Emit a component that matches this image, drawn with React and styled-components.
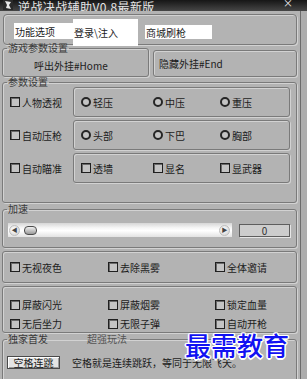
import React from "react";
import styled, { createGlobalStyle } from "styled-components";

const GlobalStyle = createGlobalStyle`
	html, body {
		margin: 0;
		padding: 0;
		background: #b3b3b3;
	}
	body {
		font-family: "Noto Sans CJK SC", "DejaVu Sans", sans-serif;
	}
`;

const Window = styled.div`
	position: relative;
	width: 307px;
	height: 379px;
	overflow: hidden;
	background: #b3b3b3;
	display: flex;
	flex-direction: column;
	font-size: 10px;
	color: #1c1c1c;
`;

const TitleBar = styled.div`
	height: 11px;
	flex-shrink: 0;
	display: flex;
	align-items: flex-end;
	overflow: hidden;
	background: linear-gradient(#161616, #464646);
`;

const TitleIcon = styled.svg`
	width: 10px;
	height: 10px;
	margin: 0 5px 0 3px;
	align-self: flex-start;
`;

const TitleText = styled.div`
	font-size: 12px;
	line-height: 12px;
	margin-bottom: -2px;
	color: #e6e6e6;
	letter-spacing: 0.4px;
	white-space: nowrap;
`;

const CloseGlyph = styled.div`
	margin-left: auto;
	margin-right: 14px;
	align-self: flex-start;
	font-size: 10px;
	line-height: 6px;
	color: #f0f0f0;
`;

const Body = styled.div`
	flex: 1;
	display: flex;
`;

const Content = styled.div`
	width: 296px;
	padding-left: 2px;
	display: flex;
	flex-direction: column;
`;

const RightEdge = styled.div`
	flex: 1;
	margin-left: 2px;
	border-left: 1px solid #6c6c6c;
	background: #adadad;
`;

const TabStrip = styled.div`
	margin: 3px 0 0 1px;
	width: 294px;
	height: 31px;
	box-sizing: border-box;
	border: 1px solid #7a7a7a;
	border-radius: 4px;
	box-shadow: inset 1px 1px 0 #d2d2d2, 1px 1px 0 #d2d2d2;
	display: flex;
	align-items: flex-start;
	padding-left: 10px;
`;

const Tab = styled.div`
	width: ${(p) => p.$w}px;
	height: ${(p) => p.$h}px;
	margin-top: ${(p) => p.$top}px;
	margin-right: ${(p) => p.$gap || 0}px;
	background: #ffffff;
	display: flex;
	align-items: center;
	padding-left: 1px;
	box-sizing: border-box;
	white-space: nowrap;
`;

const Group = styled.fieldset`
	margin: ${(p) => p.$mt || 0}px 0 0 0;
	padding: 0;
	width: ${(p) => p.$w || 295}px;
	height: ${(p) => p.$h}px;
	box-sizing: border-box;
	border: 1px solid #7a7a7a;
	border-radius: 3px;
	box-shadow: inset 1px 1px 0 #d2d2d2, 1px 1px 0 #d2d2d2;
	min-width: 0;
`;

const Legend = styled.legend`
	margin-left: 4px;
	padding: 0 1px;
	line-height: ${(p) => p.$lh || 12}px;
	color: #3a3a3a;
	white-space: nowrap;
`;

const LegendSecond = styled.span`
	margin-left: 39px;
	padding-right: 2px;
	color: #555;
`;

const GameRow = styled.div`
	margin-top: -2px;
	display: flex;
	gap: 4px;
`;

const GameLabel = styled.div`
	padding: 5px 0 0 31px;
	white-space: nowrap;
`;

const HideBox = styled.div`
	margin-top: 7px;
	width: 144px;
	height: 27px;
	box-sizing: border-box;
	border: 1px solid #7a7a7a;
	border-radius: 3px;
	box-shadow: inset 1px 1px 0 #d2d2d2, 1px 1px 0 #d2d2d2;
	display: flex;
	align-items: center;
	padding-left: 5px;
	white-space: nowrap;
`;

const ParamRow = styled.div`
	display: grid;
	grid-template-columns: 70px 217px;
	height: 30px;
	margin-bottom: 3px;
`;

const LeftCell = styled.div`
	display: flex;
	align-items: center;
	padding-left: 7px;
`;

const InnerBox = styled.div`
	box-sizing: border-box;
	border: 1px solid #7a7a7a;
	border-radius: 3px;
	box-shadow: inset 1px 1px 0 #d2d2d2, 1px 1px 0 #d2d2d2;
	display: grid;
	grid-template-columns: 72px 67px 1fr;
	align-items: center;
	padding-left: 7px;
`;

const Item = styled.div`
	display: flex;
	align-items: center;
	gap: 2px;
	white-space: nowrap;
`;

const CheckMark = styled.span`
	width: 10px;
	height: 10px;
	box-sizing: border-box;
	border: 1px solid #202020;
	box-shadow: inset 1px 1px 0 #6a6a6a;
	background: #c4c4c4;
	flex-shrink: 0;
`;

const RadioMark = styled.span`
	width: 10px;
	height: 10px;
	box-sizing: border-box;
	border: 2px solid #262626;
	border-radius: 50%;
	background: #c4c4c4;
	flex-shrink: 0;
`;

const SliderRow = styled.div`
	display: flex;
	align-items: center;
	padding: 8px 0 0 5px;
`;

const Track = styled.div`
	position: relative;
	width: 224px;
	height: 14px;
	display: flex;
	align-items: center;
	justify-content: space-between;
	padding: 0 2px 0 1px;
	box-sizing: border-box;
	background: linear-gradient(#d6d6d6, #f6f6f6 35%, #ffffff 55%, #e2e2e2);
`;

const TrackLeft = styled.div`
	display: flex;
	align-items: center;
	gap: 4px;
`;

const ArrowBtn = styled.div`
	width: 11px;
	height: 11px;
	border-radius: 50%;
	background: radial-gradient(circle at 40% 40%, #ffffff, #cfcfcf);
	border: 1px solid #bdbdbd;
	box-sizing: border-box;
	display: flex;
	align-items: center;
	justify-content: center;
	font-size: 6px;
	line-height: 6px;
	color: #444;
`;

const Thumb = styled.div`
	width: 13px;
	height: 9px;
	border-radius: 4px;
	border: 1px solid #4c4c4c;
	box-sizing: border-box;
	background: linear-gradient(#f0f0f0, #9a9a9a);
`;

const ValueBox = styled.div`
	margin-left: 7px;
	width: 51px;
	height: 13px;
	box-sizing: border-box;
	border: 1px solid #5e5e5e;
	box-shadow: 1px 1px 0 #e6e6e6;
	background: #cdcdcd;
	display: flex;
	align-items: center;
	justify-content: center;
	color: #333;
`;

const OptionBox = styled.div`
	margin-top: 3px;
	width: 295px;
	height: ${(p) => p.$h}px;
	box-sizing: border-box;
	border: 1px solid #7a7a7a;
	border-radius: 3px;
	box-shadow: inset 1px 1px 0 #d2d2d2, 1px 1px 0 #d2d2d2;
	display: grid;
	grid-template-columns: 98px 107px 1fr;
	grid-auto-rows: 19px;
	align-content: ${(p) => p.$align || "center"};
	align-items: center;
	padding: ${(p) => p.$pt || 0}px 0 0 7px;
`;

const FeatureList = styled.div`
	display: flex;
	flex-direction: column;
	gap: 9px;
	padding: 10px 0 0 4px;
`;

const FeatureRow = styled.div`
	display: flex;
	align-items: center;
	gap: 12px;
	white-space: nowrap;
`;

const FeatureBtn = styled.div`
	width: 53px;
	height: 13px;
	box-sizing: border-box;
	border: 1px solid #4a4a4a;
	box-shadow: inset 1px 1px 0 #ffffff, inset -1px -1px 0 #9a9a9a;
	background: #e4e4e4;
	display: flex;
	align-items: center;
	justify-content: center;
	flex-shrink: 0;
`;

const Watermark = styled.div`
	position: absolute;
	left: 185px;
	top: 330px;
	font-size: 26px;
	line-height: 30px;
	font-weight: 500;
	color: #1212f2;
	white-space: nowrap;
	text-shadow: 1.5px 0 0 #fff, -1.5px 0 0 #fff, 0 1.5px 0 #fff, 0 -1.5px 0 #fff,
		1px 1px 0 #fff, -1px -1px 0 #fff, 1px -1px 0 #fff, -1px 1px 0 #fff;
`;

const Check = ({ label }) => (
	<Item>
		<CheckMark />
		{label}
	</Item>
);

const Radio = ({ label }) => (
	<Item>
		<RadioMark />
		{label}
	</Item>
);

const paramRows = [
	{ main: "人物透视", kind: "radio", items: ["轻压", "中压", "重压"] },
	{ main: "自动压枪", kind: "radio", items: ["头部", "下巴", "胸部"] },
	{ main: "自动瞄准", kind: "check", items: ["透墙", "显名", "显武器"] },
];

const App = () => {
	return (
		<Window>
			<GlobalStyle />
			<TitleBar>
				<TitleIcon viewBox="0 0 10 10">
					<rect x="0" y="0" width="10" height="10" fill="#2a2a2a" />
					<path d="M2 1 L8 2 L6 5 L8 9 L3 8 L4 5 Z" fill="#e8e8e8" />
				</TitleIcon>
				<TitleText>逆战决战辅助V0.8最新版</TitleText>
				<CloseGlyph>×</CloseGlyph>
			</TitleBar>
			<Body>
				<Content>
					<TabStrip>
						<Tab $w={59} $h={16} $top={8}>功能选项</Tab>
						<Tab $w={65} $h={27} $top={4} $gap={7}>登录\注入</Tab>
						<Tab $w={67} $h={14} $top={10}>商城刷枪</Tab>
					</TabStrip>

					<GameRow>
						<Group $w={147} $h={34}>
							<Legend $lh={10}>游戏参数设置</Legend>
							<GameLabel>呼出外挂#Home</GameLabel>
						</Group>
						<HideBox>隐藏外挂#End</HideBox>
					</GameRow>

					<Group $mt={0} $h={126}>
						<Legend $lh={10}>参数设置</Legend>
						{paramRows.map((row) => (
							<ParamRow key={row.main}>
								<LeftCell>
									<Check label={row.main} />
								</LeftCell>
								<InnerBox>
									{row.items.map((it) =>
										row.kind === "radio" ? (
											<Radio key={it} label={it} />
										) : (
											<Check key={it} label={it} />
										)
									)}
								</InnerBox>
							</ParamRow>
						))}
					</Group>

					<Group $h={45}>
						<Legend>加速</Legend>
						<SliderRow>
							<Track>
								<TrackLeft>
									<ArrowBtn>◀</ArrowBtn>
									<Thumb />
								</TrackLeft>
								<ArrowBtn>▶</ArrowBtn>
							</Track>
							<ValueBox>0</ValueBox>
						</SliderRow>
					</Group>

					<OptionBox $h={32}>
						<Check label="无视夜色" />
						<Check label="去除黑雾" />
						<Check label="全体邀请" />
					</OptionBox>

					<OptionBox $h={47} $pt={8} $align="start">
						<Check label="屏蔽闪光" />
						<Check label="屏蔽烟雾" />
						<Check label="锁定血量" />
						<Check label="无后坐力" />
						<Check label="无限子弹" />
						<Check label="自动开枪" />
					</OptionBox>

					<Group $h={60}>
						<Legend>
							独家首发
							<LegendSecond>超强玩法</LegendSecond>
						</Legend>
						<FeatureList>
							<FeatureRow>
								<FeatureBtn>空格连跳</FeatureBtn>
								空格就是连续跳跃，等同于无限飞天。
							</FeatureRow>
							<FeatureRow>
								<FeatureBtn>瞬间移动</FeatureBtn>
								穿墙就是瞬间移动，人物在地图上任意穿梭。
							</FeatureRow>
						</FeatureList>
					</Group>
				</Content>
				<RightEdge />
			</Body>
			<Watermark>最需教育</Watermark>
		</Window>
	);
};

export default App;
